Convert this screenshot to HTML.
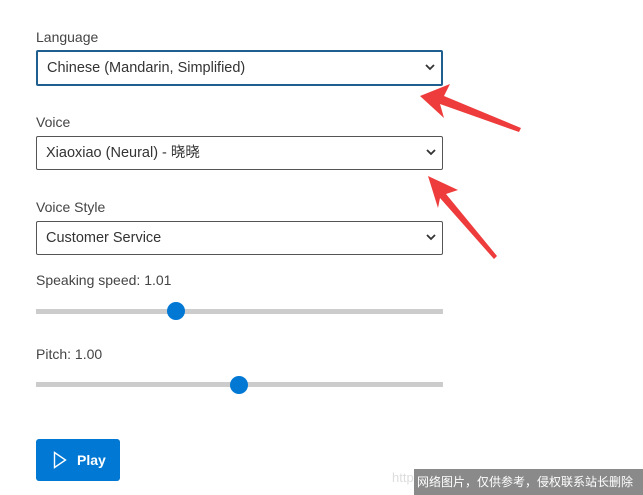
<!DOCTYPE html>
<html><head><meta charset="utf-8"><style>
body{margin:0;width:643px;height:495px;background:#fff;font-family:"Segoe UI","Liberation Sans","Noto Sans CJK SC",sans-serif;color:#333;position:relative;overflow:hidden}
.l{position:absolute;left:36px;font-size:14px;color:#444}
.s{position:absolute;left:36px;width:405px;height:32px;border:1px solid #555;border-radius:2px;box-sizing:content-box;font-size:14.5px;line-height:33px;text-indent:9px;color:#333}
.s svg{position:absolute;right:6px;top:11px}
.tr{position:absolute;left:36px;width:407px;height:5px;background:#ccc}
.th{position:absolute;width:18px;height:18px;border-radius:50%;background:#0078d4}
</style></head><body>
<div class="l" style="top:29px">Language</div>
<div class="s" style="top:50px;border:2px solid #1f5f8f;width:403px;left:36px">Chinese (Mandarin, Simplified)<svg width="10" height="8"><path d="M1 2l4 4 4-4" stroke="#333" stroke-width="1.8" fill="none"/></svg></div>
<div class="l" style="top:114px">Voice</div>
<div class="s" style="top:136px">Xiaoxiao (Neural) - 晓晓<svg width="10" height="8"><path d="M1 2l4 4 4-4" stroke="#333" stroke-width="1.8" fill="none"/></svg></div>
<div class="l" style="top:199px">Voice Style</div>
<div class="s" style="top:221px">Customer Service<svg width="10" height="8"><path d="M1 2l4 4 4-4" stroke="#333" stroke-width="1.8" fill="none"/></svg></div>
<div class="l" style="top:272px">Speaking speed: 1.01</div>
<div class="tr" style="top:309px"></div><div class="th" style="left:167px;top:302px"></div>
<div class="l" style="top:346px">Pitch: 1.00</div>
<div class="tr" style="top:382px"></div><div class="th" style="left:230px;top:376px"></div>
<div style="position:absolute;left:36px;top:439px;width:84px;height:42px;background:#0078d4;border-radius:3px;color:#fff;font-size:14px;font-weight:bold;line-height:42px">
<svg style="position:absolute;left:17px;top:12px" width="14" height="18"><path d="M1.5 1.5L12.5 9 1.5 16.5Z" stroke="#fff" stroke-width="1.4" fill="none"/></svg><span style="position:absolute;left:41px">Play</span></div>
<svg style="position:absolute;left:0;top:0" width="643" height="495">
<polygon points="420,96 450,84 444,96 521,128 519,132 440,104 444,118" fill="#ee3b3b"/>
<polygon points="428,176 458,190 446,194 497,256 494,259 440,198 438,208" fill="#ee3b3b"/>
</svg>
<div style="position:absolute;left:392px;top:470px;font-size:13px;color:#ddd">http</div>
<div style="position:absolute;left:414px;top:469px;width:229px;height:26px;background:#8a8a8a;color:#fff;font-size:12px;line-height:26px;text-indent:3px;white-space:nowrap;overflow:hidden">网络图片，仅供参考，侵权联系站长删除</div>
</body></html>
